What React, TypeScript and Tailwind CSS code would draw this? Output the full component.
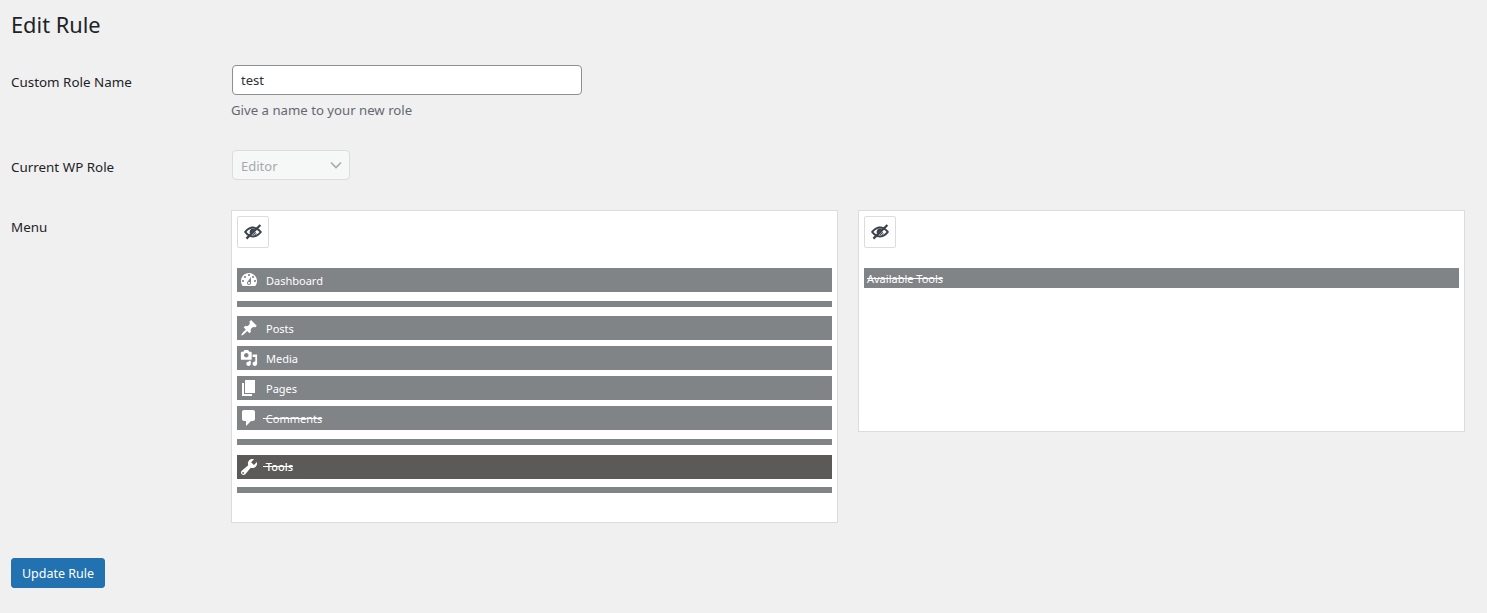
import React from "react"

const icons: Record<string, string> = {
  dashboard: "M3.76 16h12.48c1.1-1.37 1.76-3.11 1.76-5 0-4.42-3.58-8-8-8s-8 3.58-8 8c0 1.89.66 3.63 1.76 5zM10 4c.55 0 1 .45 1 1s-.45 1-1 1-1-.45-1-1 .45-1 1-1zM6 6c.55 0 1 .45 1 1s-.45 1-1 1-1-.45-1-1 .45-1 1-1zm8 0c.55 0 1 .45 1 1s-.45 1-1 1-1-.45-1-1 .45-1 1-1zm-5.37 5.55L12 7v6c0 1.1-.9 2-2 2s-2-.9-2-2c0-.57.24-1.08.63-1.45zM4 10c.55 0 1 .45 1 1s-.45 1-1 1-1-.45-1-1 .45-1 1-1zm12 0c.55 0 1 .45 1 1s-.45 1-1 1-1-.45-1-1 .45-1 1-1zm-5 3c0-.55-.45-1-1-1s-1 .45-1 1 .45 1 1 1 1-.45 1-1z",
  posts: "M10.44 3.02l1.82-1.82 6.36 6.35-1.83 1.82c-1.05-.68-2.48-.57-3.41.36l-.75.75c-.92.93-1.04 2.35-.35 3.41l-1.83 1.82-2.41-2.41-2.8 2.79c-.42.42-3.38 2.71-3.8 2.29s1.86-3.39 2.28-3.81l2.79-2.79L4.1 9.36l1.83-1.82c1.05.69 2.48.57 3.4-.36l.75-.75c.93-.92 1.05-2.35.36-3.41z",
  media: "M13 11V4c0-.55-.45-1-1-1h-1.67L9 1H5L3.67 3H2c-.55 0-1 .45-1 1v7c0 .55.45 1 1 1h10c.55 0 1-.45 1-1zM7 4.5c1.38 0 2.5 1.12 2.5 2.5S8.38 9.5 7 9.5 4.5 8.38 4.5 7 5.62 4.5 7 4.5zM14 6h5v10.5c0 1.38-1.12 2.5-2.5 2.5S14 17.88 14 16.5s1.12-2.5 2.5-2.5c.17 0 .34.02.5.05V9h-3V6zm-4 8.05V13h2v3.5c0 1.38-1.12 2.5-2.5 2.5S7 17.88 7 16.5 8.12 14 9.5 14c.17 0 .34.02.5.05z",
  pages: "M6 15V2h10v13H6zm-1 1h8v2H3V5h2v11z",
  comments: "M5 2h9c1.1 0 2 .9 2 2v7c0 1.1-.9 2-2 2h-2l-5 5v-5H5c-1.1 0-2-.9-2-2V4c0-1.1.9-2 2-2z",
  tools: "M16.68 9.77c-1.34 1.34-3.3 1.67-4.95.99l-5.41 6.52c-.99.99-2.59.99-3.58 0s-.99-2.59 0-3.58l6.52-5.42c-.68-1.65-.35-3.61.99-4.95 1.28-1.28 3.12-1.62 4.72-1.06l-2.89 2.89 2.82 2.82 2.89-2.89c.56 1.6.22 3.44-1.11 4.68zM4.1 15a.9.9 0 1 0 0 1.8.9.9 0 0 0 0-1.8z",
}

function Dashicon({ name }: { name: string }) {
  // the pin and media glyphs sit smaller in the icon box than the raw paths
  const small = name === "posts" || name === "media"
  return (
    <svg viewBox="0 0 20 20" className={`w-5 h-5 fill-white shrink-0 ${small ? "scale-90" : ""}`} fillRule="evenodd">
      <path d={icons[name]} />
    </svg>
  )
}

function EyeButton() {
  return (
    <button className="flex items-center justify-center w-8 h-8 bg-white border border-[#dcdcde] rounded-[2px]">
      <svg viewBox="0 0 20 20" className="w-5 h-5 fill-[#3c434a]" fillRule="evenodd">
        <path d="M10 4.6c3.9 0 7 2.6 9 5.4-2 2.8-5.1 5.4-9 5.4S3 12.8 1 10c2-2.8 5.1-5.4 9-5.4zM10 6.6c-2.6 0-4.9 1.5-6.5 3.4 1.6 1.9 3.9 3.4 6.5 3.4s4.9-1.5 6.5-3.4c-1.6-1.9-3.9-3.4-6.5-3.4z" />
        <path d="M10 6.5a3.5 3.5 0 0 1 2 .65L7.2 12A3.5 3.5 0 0 1 10 6.5z" />
        <path d="M12.2 9.8l.8.7-2.8 2.8-1-.3zM13.3 11l.3.8-1.6 1.5-1-.1z" />
        <path d="M16.6 2.2l1.6 1.6L4.2 17.4l-1.6-1.6z" />
      </svg>
    </button>
  )
}

function Separator() {
  return <div className="h-1.5 bg-[#808487]" />
}

function MenuRow({ icon, label, struck, dark }: { icon: string, label: string, struck?: boolean, dark?: boolean }) {
  return (
    <div className={`flex items-center h-6 pl-[2px] text-white text-[11px] ${dark ? "bg-[#5c5a58]" : "bg-[#808487]"}`}>
      <Dashicon name={icon} />
      {struck
        ? <span className={`ml-[4px] line-through whitespace-pre ${dark ? "mt-[1px] font-medium" : "mt-[3px]"}`}>{" " + label}</span>
        : <span className="ml-[7px] mt-[3px]">{label}</span>}
    </div>
  )
}

function FormRow({ label, className, children }: { label: string, className: string, children: React.ReactNode }) {
  return (
    <div className={`flex ${className}`}>
      <label className="w-[220px] shrink-0 mt-[7px] text-[#1d2327] text-[13.4px] leading-[20px]">{label}</label>
      <div className="flex-1 min-w-0">{children}</div>
    </div>
  )
}

export default function App() {
  return (
    <div className="min-h-[613px] bg-[#f0f0f1] pl-[11px] pr-[22px] pt-[10px] font-['Noto_Sans',sans-serif] overflow-hidden">
      <h1 className="text-[21.8px] leading-[29px] text-[#1d2327]">Edit Rule</h1>

      <FormRow label="Custom Role Name" className="mt-[26px]">
        <input
          readOnly
          value="test"
          className="block ml-[1px] w-[350px] h-[30px] px-[8px] bg-white border border-[#8c8f94] rounded text-[13px] text-[#2c3338] outline-none"
        />
        <p className="mt-[5px] text-[13.2px] leading-[20px] text-[#646970]">Give a name to your new role</p>
      </FormRow>

      <FormRow label="Current WP Role" className="mt-[30px]">
        <div className="ml-[1px] flex items-center justify-between w-[118px] h-[30px] pl-[8px] pr-[5px] bg-[#f6f7f7] border border-[#dcdcde] rounded text-[13px] text-[#a7aaad]">
          <span className="mt-[4px]">Editor</span>
          <svg viewBox="0 0 16 16" className="w-4 h-4 fill-none stroke-[#a7aaad] stroke-[1.6]">
            <path d="M3 5.5l5 5 5-5" />
          </svg>
        </div>
      </FormRow>

      <FormRow label="Menu" className="mt-[30px]">
        <div className="flex items-start gap-[20px]">
          <div className="w-[607px] h-[313px] bg-white border border-[#dcdcde] p-[5px]">
            <EyeButton />
            <div className="mt-[20px]"><MenuRow icon="dashboard" label="Dashboard" /></div>
            <div className="mt-[9px]"><Separator /></div>
            <div className="mt-[9px] flex flex-col gap-[6px]">
              <MenuRow icon="posts" label="Posts" />
              <MenuRow icon="media" label="Media" />
              <MenuRow icon="pages" label="Pages" />
              <MenuRow icon="comments" label="Comments" struck />
            </div>
            <div className="mt-[9px]"><Separator /></div>
            <div className="mt-[10px]"><MenuRow icon="tools" label="Tools" struck dark /></div>
            <div className="mt-[8px]"><Separator /></div>
          </div>

          <div className="w-[607px] h-[222px] bg-white border border-[#dcdcde] p-[5px]">
            <EyeButton />
            <div className="mt-[20px] flex items-center h-5 pl-[3px] bg-[#808487] text-white text-[11px]">
              <span className="mt-[3px] line-through">Available Tools</span>
            </div>
          </div>
        </div>
      </FormRow>

      <button className="block mt-[35px] h-[30px] w-[94px] pt-[2px] bg-[#2271b1] border border-[#2271b1] rounded-[3px] text-white text-[12.5px]">
        Update Rule
      </button>
    </div>
  )
}
